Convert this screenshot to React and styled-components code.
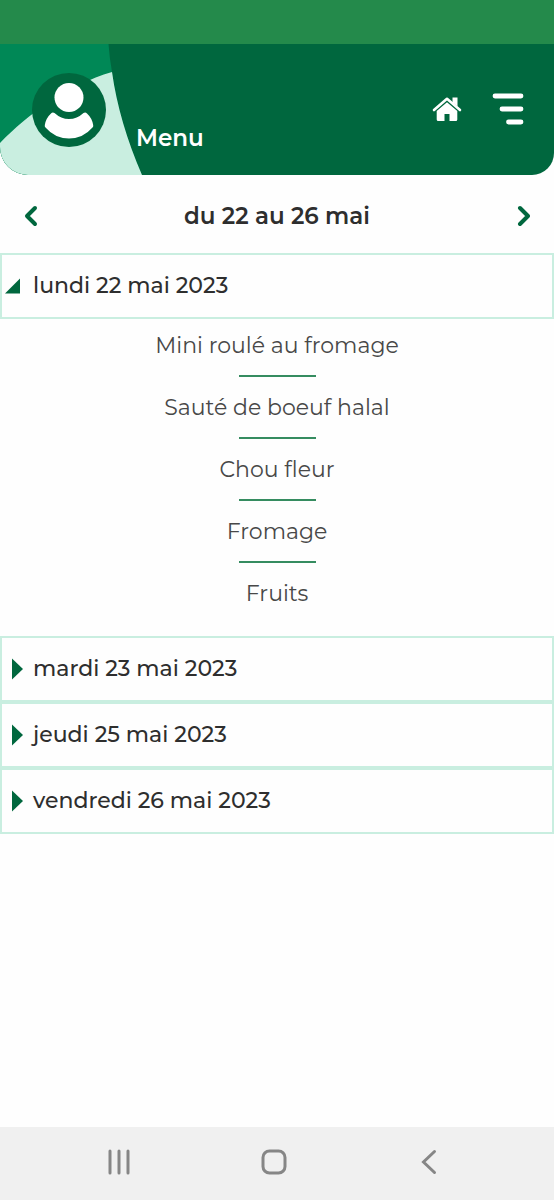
import { useState } from 'react';
import styled, { createGlobalStyle } from 'styled-components';

const days = [
  {
    id: 'lundi',
    label: 'lundi 22 mai 2023',
    dishes: ['Mini roulé au fromage', 'Sauté de boeuf halal', 'Chou fleur', 'Fromage', 'Fruits'],
  },
  { id: 'mardi', label: 'mardi 23 mai 2023', dishes: [] },
  { id: 'jeudi', label: 'jeudi 25 mai 2023', dishes: [] },
  { id: 'vendredi', label: 'vendredi 26 mai 2023', dishes: [] },
];

const App = () => {
  const [openDay, setOpenDay] = useState('lundi');

  return (
    <>
      <GlobalStyle />
      <Page>
        <StatusBar />
        <Header>
          <HeaderShapes viewBox="0 0 142 131" aria-hidden="true">
            <path d="M0 0H108.500Q109.500 14 112 28Q119 78 142 131H0Z" fill="#008856" />
            <path d="M0 99C28 70 68 41 112 28Q119 78 142 131H0Z" fill="#c9eee0" />
          </HeaderShapes>
          <ProfileButton type="button" aria-label="Profil">
            <svg width="74" height="74" viewBox="0 0 74 74">
              <circle cx="37" cy="37" r="37" fill="#00673e" />
              <circle cx="37" cy="24.500" r="14.500" fill="#fff" />
              <path
                d="M22.500 40Q20.500 39 19 40.500Q14 45 12.800 52Q12.500 53.500 13.500 54.500Q23 65.500 37 65.500Q51 65.500 60.500 54.500Q61.500 53.500 61.200 52Q60 45 55 40.500Q53.500 39 51.500 40Q45 46 37 46Q29 46 22.500 40Z"
                fill="#fff"
              />
            </svg>
          </ProfileButton>
          <Title>Menu</Title>
          <HeaderActions>
            <IconButton type="button" aria-label="Accueil">
              <svg width="30" height="26" viewBox="0 0 30 26">
                <path
                  d="M2 14L15 2.800L28 14"
                  fill="none"
                  stroke="#fff"
                  strokeWidth="2.600"
                  strokeLinecap="round"
                  strokeLinejoin="round"
                />
                <path d="M20.500 1.500H25.500V10.500L20.500 6.500Z" fill="#fff" />
                <path
                  d="M15 6.200L25.300 15V23.500Q25.300 25 23.800 25H17.500V18H12.500V25H6.200Q4.700 25 4.700 23.500V15Z"
                  fill="#fff"
                />
              </svg>
            </IconButton>
            <IconButton type="button" aria-label="Ouvrir le menu">
              <svg width="32" height="32" viewBox="0 0 32 32" stroke="#fff" strokeWidth="4.800" strokeLinecap="round">
                <path d="M3 3H29M10 16H29M16.500 29H29" />
              </svg>
            </IconButton>
          </HeaderActions>
        </Header>

        <Content>
          <WeekNav>
            <ArrowButton type="button" aria-label="Semaine précédente">
              <svg width="14" height="22" viewBox="0 0 14 22">
                <path d="M11 3L3 11L11 19" />
              </svg>
            </ArrowButton>
            <WeekLabel>du 22 au 26 mai</WeekLabel>
            <ArrowButton type="button" aria-label="Semaine suivante">
              <svg width="14" height="22" viewBox="0 0 14 22">
                <path d="M4 3L12 11L4 19" />
              </svg>
            </ArrowButton>
          </WeekNav>

          {days.map((day) => {
            const open = day.id === openDay;
            return (
              <section key={day.id}>
                <DayButton type="button" aria-expanded={open} onClick={() => setOpenDay(open ? null : day.id)}>
                  <Marker viewBox="0 0 20 22" aria-hidden="true">
                    <path d={open ? 'M0 18.500H15V3.500Z' : 'M7 0.500V21.500L18 11Z'} />
                  </Marker>
                  {day.label}
                </DayButton>
                {open && (
                  <DishList>
                    {day.dishes.map((dish) => (
                      <Dish key={dish}>{dish}</Dish>
                    ))}
                  </DishList>
                )}
              </section>
            );
          })}
        </Content>

        <SystemNav>
          <SystemButton type="button" aria-label="Applications récentes">
            <svg width="26" height="26" viewBox="0 0 26 26">
              <path d="M4 2V24M13 2V24M22 2V24" />
            </svg>
          </SystemButton>
          <SystemButton type="button" aria-label="Écran d'accueil">
            <svg width="26" height="26" viewBox="0 0 26 26">
              <rect x="2" y="2" width="22" height="22" rx="6.500" />
            </svg>
          </SystemButton>
          <SystemButton type="button" aria-label="Retour">
            <svg width="26" height="26" viewBox="0 0 26 26">
              <path d="M18.500 2.500L7.500 13L18.500 23.500" />
            </svg>
          </SystemButton>
        </SystemNav>
      </Page>
    </>
  );
};

// Styled Components
const GlobalStyle = createGlobalStyle`
* {
  box-sizing: border-box;
}
body {
  margin: 0;
  background: #fefefe;
  color: #2e2e2e;
  font-family: Montserrat, Inter, sans-serif;
}
button {
  border: none;
  padding: 0;
  background: none;
  color: inherit;
  font: inherit;
  cursor: pointer;
}
svg {
  display: block;
}
`;

const Page = styled.div`
  display: flex;
  flex-direction: column;
  min-height: 100vh;
`;

const StatusBar = styled.div`
  height: 44px;
  background: #248a4b;
`;

const Header = styled.header`
  position: relative;
  display: flex;
  align-items: center;
  height: 131px;
  padding: 0 30px 0 32px;
  overflow: hidden;
  border-radius: 0 0 22px 28px;
  background: #00673e;
  color: #ffffff;
`;

const HeaderShapes = styled.svg`
  position: absolute;
  top: 0;
  left: 0;
  height: 100%;
`;

const ProfileButton = styled.button`
  position: relative;
`;

const Title = styled.h1`
  align-self: flex-end;
  margin: 0 0 22px 30px;
  font-size: 23px;
  font-weight: 600;
  line-height: 30px;
`;

const HeaderActions = styled.div`
  display: flex;
  align-items: center;
  gap: 30px;
  margin-left: auto;
  padding-bottom: 2px;
`;

const IconButton = styled.button`
  color: #ffffff;
`;

const Content = styled.main`
  flex: 1;
`;

const WeekNav = styled.nav`
  display: flex;
  align-items: center;
  justify-content: space-between;
  height: 78px;
  padding: 4px 24px 0;
`;

const WeekLabel = styled.h2`
  margin: 0;
  font-size: 23px;
  font-weight: 600;
  line-height: 30px;
`;

const ArrowButton = styled.button`
  path {
    fill: none;
    stroke: #00673e;
    stroke-width: 4;
    stroke-linecap: round;
    stroke-linejoin: round;
  }
`;

const DayButton = styled.button`
  display: flex;
  align-items: center;
  gap: 8px;
  width: 100%;
  height: 66px;
  padding: 0 3px;
  border: 2px solid #c9eee0;
  font-size: 22px;
  font-weight: 500;
  line-height: 28px;
  text-align: left;
`;

const Marker = styled.svg`
  width: 20px;
  height: 22px;
  fill: #00673e;
`;

const DishList = styled.ul`
  margin: 0;
  padding: 12px 16px 27px;
  list-style: none;
  text-align: center;
`;

const Dish = styled.li`
  color: #484848;
  font-size: 22px;
  font-weight: 400;
  line-height: 30px;

  &:not(:last-child)::after {
    content: '';
    display: block;
    width: 77px;
    height: 2px;
    margin: 14px auto 16px;
    background: #358c60;
  }
`;

const SystemNav = styled.nav`
  display: grid;
  grid-template-columns: repeat(3, 1fr);
  align-items: center;
  height: 73px;
  padding: 0 48px 4px 42px;
  background: #f0f0f0;
`;

const SystemButton = styled.button`
  justify-self: center;

  svg {
    fill: none;
    stroke: #868686;
    stroke-width: 3;
    stroke-linecap: round;
  }
`;

export default App;
